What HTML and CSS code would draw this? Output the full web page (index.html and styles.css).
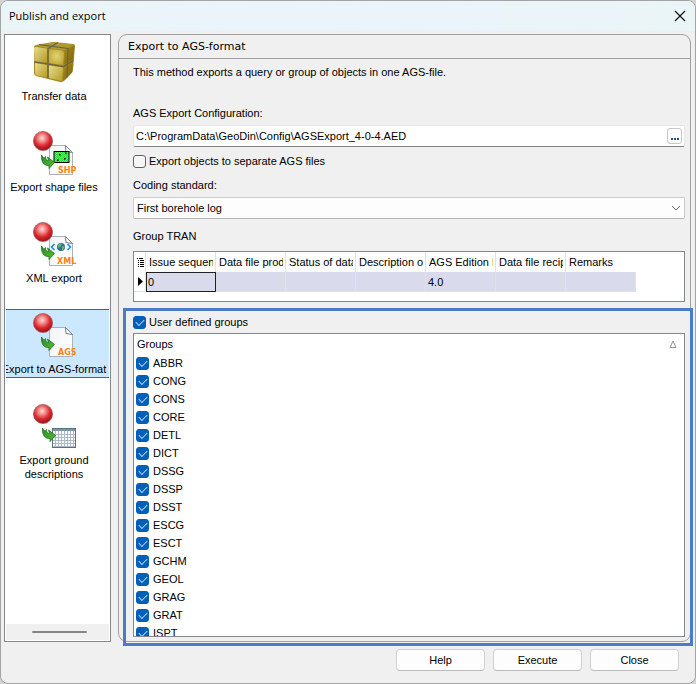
FILE: index.html
```html
<!DOCTYPE html>
<html lang="en">
<head>
<meta charset="utf-8">
<title>Publish and export</title>
<link rel="stylesheet" href="styles.css">
</head>
<body>
<svg class="defs" aria-hidden="true">
  <defs>
    <radialGradient id="red" cx="45%" cy="35%" r="62%">
      <stop offset="0" stop-color="#ffdada"/>
      <stop offset=".3" stop-color="#f58c8c"/>
      <stop offset=".65" stop-color="#dc2a30"/>
      <stop offset="1" stop-color="#a01018"/>
    </radialGradient>
    <linearGradient id="paper" x1="0" y1="0" x2="1" y2="1">
      <stop offset="0" stop-color="#f1f3f5"/>
      <stop offset="1" stop-color="#ffffff"/>
    </linearGradient>
    <linearGradient id="leaf" x1="0" y1="0" x2="1" y2="1">
      <stop offset="0" stop-color="#2c8a2c"/>
      <stop offset="1" stop-color="#56c02a"/>
    </linearGradient>
    <radialGradient id="goldlight" cx="50%" cy="45%" r="70%">
      <stop offset="0" stop-color="#e2d273"/>
      <stop offset="1" stop-color="#bba12a"/>
    </radialGradient>
    <linearGradient id="gold" x1="0" y1="0" x2="1" y2="1">
      <stop offset="0" stop-color="#e8dc8e"/>
      <stop offset="1" stop-color="#b79a24"/>
    </linearGradient>
    <linearGradient id="golddark" x1="0" y1="0" x2="1" y2="1">
      <stop offset="0" stop-color="#a68c1c"/>
      <stop offset="1" stop-color="#7a6408"/>
    </linearGradient>
    <pattern id="dither" width="2" height="2" patternUnits="userSpaceOnUse">
      <rect width="2" height="2" fill="#5cf05c"/>
      <rect width="1" height="1" fill="#2fd83a"/>
      <rect x="1" y="1" width="1" height="1" fill="#2fd83a"/>
    </pattern>
    <symbol id="ball" viewBox="0 0 48 48">
      <circle cx="13" cy="11" r="9.6" fill="url(#red)" stroke="#a0686c" stroke-width=".8"/>
    </symbol>
    <symbol id="arrow" viewBox="0 0 48 48">
      <path d="M11.500 25L14 28.500L15.500 26.500C15.500 29.500 16.500 30.500 18.500 30.500L17.500 27L24.500 32.500L19 38.500V35.500C14 36 11 32 11.500 25Z" fill="url(#leaf)" stroke="#1f6f22" stroke-width=".8" stroke-linejoin="round"/>
    </symbol>
    <symbol id="page" viewBox="0 0 48 48">
      <path d="M19.500 15.500H35.500L42.500 22.500V44.500H19.500Z" fill="url(#paper)" stroke="#aab2b8"/>
      <path d="M35.500 15.500L42.500 22.500L36 21.500Z" fill="#ffffff" stroke="#737f88"/>
    </symbol>
  </defs>
</svg>

<main class="window">
  <header class="titlebar">
    <h1>Publish and export</h1>
    <button class="close" type="button" aria-label="Close window">
      <svg viewBox="0 0 12 12"><path d="M1 1L11 11M11 1L1 11"/></svg>
    </button>
  </header>

  <div class="body">
    <nav class="sidebar" aria-label="Export methods">
      <div class="methods">
        <button class="method" type="button">
          <svg class="icon" viewBox="0 0 48 48">
            <path d="M4 8Q4 6.500 6 6L20 3.500Q22 3 24 3L43 5Q45 5 45 7L43 31Q43 33 41 35L34 42Q32 43.500 30 43L6 37Q4 36.500 4 34Z" fill="#a18a24"/>
            <path d="M5 7L22 3.500L43 5.500L34 11L18 9Z" fill="#b09a34"/>
            <path d="M4 9Q4 8 6 8L17 9.500V23.500L4.500 22Z" fill="url(#gold)"/>
            <path d="M19 10L32 11.500Q34 12 34 14L33 26L19 24Z" fill="url(#goldlight)"/>
            <path d="M5 24L17 26V38.500L7 36.500Q5 36 5 34Z" fill="url(#gold)"/>
            <path d="M19 26.500L33 28.500L32 42L19 39Z" fill="url(#gold)"/>
            <path d="M35 12L44.500 6.500L43 20.500L34 26Z" fill="url(#golddark)"/>
            <path d="M34 29L43 23L42 33L33 42Z" fill="url(#golddark)"/>
            <path d="M4 23L18 25L33.500 27.500L43.500 21.500M18 39.500V9.500L28 3.500M9 5.500L38 9.500L37 38.500" fill="none" stroke="#67614a" stroke-width="1.200"/>
          </svg>
          <span>Transfer data</span>
        </button>
        <button class="method" type="button">
          <svg class="icon" viewBox="0 0 48 48">
            <use href="#page"/><use href="#ball"/>
            <rect x="24" y="21.500" width="15" height="11" fill="url(#dither)" stroke="#000"/>
            <path d="M29 24h1.500v1.500H29zM35 22.500h1.500V24H35zM34 28h1.500v1.500H34zM27 29.500h1.500V31H27z" fill="#000"/>
            <use href="#arrow"/>
            <text class="tag" x="28" y="43">SHP</text>
          </svg>
          <span>Export shape files</span>
        </button>
        <button class="method" type="button">
          <svg class="icon" viewBox="0 0 48 48">
            <use href="#page"/><use href="#ball"/>
            <circle cx="31" cy="26" r="4" fill="#2e70a5"/>
            <path d="M28 24Q30 21.500 32 23L30 26L28.500 27ZM32 25L35 26L32 29.500Z" fill="#79b66b"/>
            <path d="M24.500 23L21.500 26L24.500 29M37.500 23L40.500 26L37.500 29" fill="none" stroke="#1684e8" stroke-width="1.500"/>
            <use href="#arrow"/>
            <text class="tag" x="27" y="43">XML</text>
          </svg>
          <span>XML export</span>
        </button>
        <button class="method selected" type="button" aria-current="true">
          <svg class="icon" viewBox="0 0 48 48">
            <use href="#page"/><use href="#ball"/><use href="#arrow"/>
            <text class="tag" x="28" y="43">AGS</text>
          </svg>
          <span>Export to AGS-format</span>
        </button>
        <button class="method" type="button">
          <svg class="icon" viewBox="0 0 48 48">
            <rect x="22.500" y="25.500" width="23" height="19" fill="#f8fafc" stroke="#5b7180"/>
            <path d="M23 27H45" stroke="#8193a1" stroke-width="2"/>
            <path d="M25.500 28V44M28.500 28V44M31.500 28V44M34.500 28V44M37.500 28V44M40.500 28V44M43.500 28V44M23 31.500H45M23 34.500H45M23 37.500H45M23 40.500H45M23 43.500H45" stroke="#adbac5"/>
            <use href="#ball"/><use href="#arrow" x="1"/>
          </svg>
          <span>Export ground descriptions</span>
        </button>
      </div>
      <div class="scroller"><i></i></div>
    </nav>

    <section class="panel">
      <h2>Export to AGS-format</h2>
      <form class="content" id="export">
        <p class="intro">This method exports a query or group of objects in one AGS-file.</p>

        <label class="caption" for="config">AGS Export Configuration:</label>
        <div class="path">
          <input id="config" type="text" value="C:\ProgramData\GeoDin\Config\AGSExport_4-0-4.AED">
          <button type="button" aria-label="Browse">
            <svg viewBox="0 0 8 2"><path d="M0 0h2v2H0zM3 0h2v2H3zM6 0h2v2H6z"/></svg>
          </button>
        </div>

        <label class="check separate"><input type="checkbox">Export objects to separate AGS files</label>

        <label class="caption" for="coding">Coding standard:</label>
        <div class="choice">
          <select id="coding"><option>First borehole log</option></select>
          <svg viewBox="0 0 10 6"><path d="M1 1L5 5L9 1"/></svg>
        </div>

        <h3 class="caption">Group TRAN</h3>
        <div class="grid">
          <table>
            <colgroup><col class="marker"><col><col><col><col><col><col><col></colgroup>
            <thead>
              <tr>
                <th><svg class="rows" viewBox="0 0 7 9"><path d="M0 .5h1M2 .5h4M1 2.500h1M3 2.500h4M1 4.500h1M3 4.500h4M1 6.500h1M3 6.500h4M1 8.500h1M3 8.500h4"/></svg></th>
                <th><div>Issue sequence</div></th><th><div>Data file producer</div></th><th><div>Status of data</div></th><th><div>Description of</div></th><th><div>AGS Edition Ref</div></th><th><div>Data file recipient</div></th><th><div>Remarks</div></th>
              </tr>
            </thead>
            <tbody>
              <tr>
                <td><svg class="current" viewBox="0 0 5 9"><path d="M0 0L5 4.500L0 9Z"/></svg></td>
                <td class="focused">0</td><td></td><td></td><td></td><td>4.0</td><td></td><td></td>
              </tr>
            </tbody>
          </table>
        </div>

        <section class="groups">
          <label class="check"><input type="checkbox" checked>User defined groups</label>
          <div class="list">
            <div class="listhead">
              <span>Groups</span>
              <svg viewBox="0 0 8 8"><path d="M4 1L7 7.500H1Z"/></svg>
            </div>
            <ul>
              <li><label class="check"><input type="checkbox" checked>ABBR</label></li>
              <li><label class="check"><input type="checkbox" checked>CONG</label></li>
              <li><label class="check"><input type="checkbox" checked>CONS</label></li>
              <li><label class="check"><input type="checkbox" checked>CORE</label></li>
              <li><label class="check"><input type="checkbox" checked>DETL</label></li>
              <li><label class="check"><input type="checkbox" checked>DICT</label></li>
              <li><label class="check"><input type="checkbox" checked>DSSG</label></li>
              <li><label class="check"><input type="checkbox" checked>DSSP</label></li>
              <li><label class="check"><input type="checkbox" checked>DSST</label></li>
              <li><label class="check"><input type="checkbox" checked>ESCG</label></li>
              <li><label class="check"><input type="checkbox" checked>ESCT</label></li>
              <li><label class="check"><input type="checkbox" checked>GCHM</label></li>
              <li><label class="check"><input type="checkbox" checked>GEOL</label></li>
              <li><label class="check"><input type="checkbox" checked>GRAG</label></li>
              <li><label class="check"><input type="checkbox" checked>GRAT</label></li>
              <li><label class="check"><input type="checkbox" checked>ISPT</label></li>
            </ul>
          </div>
        </section>
      </form>
    </section>
  </div>

  <footer class="actions">
    <button type="button">Help</button>
    <button type="submit" form="export">Execute</button>
    <button type="button">Close</button>
  </footer>
</main>
</body>
</html>
```

FILE: styles.css
```css
* { box-sizing: border-box; }

body {
  margin: 0;
  background: #d4d4d4;
  color: #000;
  font: 11px/14px "Liberation Sans", Arial, sans-serif;
}

button, input, select { font: inherit; color: inherit; margin: 0; }
h1, h2, h3, p, ul { margin: 0; padding: 0; font: inherit; }
ul { list-style: none; }
svg { display: block; }
.defs { position: absolute; width: 0; height: 0; }

.window {
  display: flex;
  flex-direction: column;
  height: 100vh;
  border: 1px solid #a3a3a3;
  border-radius: 8px;
  background: #f0f0f0;
  overflow: hidden;
}

.titlebar {
  display: flex;
  flex: none;
  align-items: center;
  justify-content: space-between;
  height: 30px;
  padding: 0 9px 0 8px;
  background: linear-gradient(90deg, #eaf5f8, #ebf3fb 50%, #eaf5f7);
}
.titlebar h1 { font: 11px/16px "Open Sans", "Noto Sans", sans-serif; }
.close { padding: 0; border: 0; background: none; }
.close svg { width: 12px; height: 12px; fill: none; stroke: #111; stroke-width: 1.2; }

.body {
  display: flex;
  flex: 1;
  gap: 7px;
  min-height: 0;
  padding: 3px 4px 0 3px;
}

.sidebar {
  display: flex;
  flex: none;
  flex-direction: column;
  width: 107px;
  padding: 1px;
  border: 1px solid #828790;
  background: #fff;
}
.methods {
  display: flex;
  flex: 1;
  flex-direction: column;
  gap: 22px;
  min-height: 0;
  overflow: hidden;
}
.method {
  display: flex;
  flex: none;
  flex-direction: column;
  align-items: center;
  min-height: 69px;
  padding: 2px 7px 1px 0;
  border: solid transparent;
  border-width: 1px 0;
  background: none;
  overflow: hidden;
}
.method span { width: 108px; padding: 0 8px; text-align: center; }
.method.selected { border-color: #0078d4; background: #cce8ff; }
.method.selected span { padding: 0; white-space: nowrap; }
.icon { flex: none; width: 48px; height: 48px; margin-bottom: 2px; }
.tag { font: bold 8px "DejaVu Sans", sans-serif; fill: #ff8210; }
.scroller {
  display: flex;
  align-items: center;
  justify-content: center;
  height: 16px;
  padding-left: 4px;
  background: #f0f0f0;
}
.scroller i { width: 55px; height: 2px; border-radius: 1px; background: #858585; }

.panel {
  display: flex;
  flex: 1;
  flex-direction: column;
  min-width: 0;
  border: 1px solid #a0a0a0;
  border-radius: 9px;
}
.panel h2 {
  padding: 5px 9px 4px;
  border-bottom: 1px solid #a0a0a0;
  font-family: "DejaVu Sans", Verdana, sans-serif;
}
.content {
  display: flex;
  flex: 1;
  flex-direction: column;
  min-height: 0;
  padding: 6px 5px 4px 14px;
}
.intro { margin-bottom: 27px; }
.caption { display: block; }

.path {
  display: flex;
  align-items: center;
  height: 22px;
  margin-top: 5px;
  padding-right: 2px;
  border: 1px solid #e6e6e6;
  border-bottom-color: #858585;
  border-radius: 2px;
  background: #fff;
}
.path input {
  flex: 1;
  min-width: 0;
  padding: 0 2px;
  border: 0;
  background: none;
  outline: 0;
}
.path button {
  display: flex;
  align-items: flex-end;
  justify-content: center;
  width: 15px;
  height: 16px;
  padding: 0 0 3px;
  border: 1px solid #c8c8c8;
  border-radius: 3px;
  background: #fdfdfd;
}
.path svg { width: 8px; height: 2px; fill: #2c5078; }

.check { display: flex; align-items: center; gap: 3px; }
.check input {
  appearance: none;
  flex: none;
  width: 13px;
  height: 13px;
  border: 1px solid #626262;
  border-radius: 3px;
  background: #f6f6f6;
}
.check input:checked {
  border-color: #005fb8;
  background: #005fb8;
}
.check input:checked::after {
  content: "";
  display: block;
  width: 7px;
  height: 4px;
  margin: 2px 0 0 2px;
  border: solid #b8d4ee;
  border-width: 0 0 1px 1px;
  transform: rotate(-45deg);
}
.separate { margin: 7px 0 10px; }

.choice {
  display: grid;
  align-items: center;
  height: 22px;
  margin: 5px 0 10px;
}
.choice > * { grid-area: 1 / 1; }
.choice select {
  appearance: none;
  width: 100%;
  height: 22px;
  padding: 0 20px 0 3px;
  border: 1px solid #ccc;
  border-bottom-color: #b8b8b8;
  border-radius: 2px;
  background: #fdfdfd;
}
.choice svg {
  justify-self: end;
  width: 10px;
  height: 6px;
  margin-right: 4px;
  fill: none;
  stroke: #606060;
  pointer-events: none;
}

.grid {
  flex: none;
  height: 51px;
  margin: 8px 0 13px;
  border: 1px solid #828790;
  background: #fff;
  overflow: hidden;
}
.grid table {
  width: 502px;
  border-collapse: separate;
  border-spacing: 0;
  table-layout: fixed;
}
.grid col { width: 70px; }
.grid .marker { width: 12px; }
.grid th, .grid td {
  height: 20px;
  padding: 0 0 0 2px;
  border-right: 1px solid #e2e2e2;
  font-weight: normal;
  text-align: left;
}
.grid th { padding: 0 2px 0 3px; }
.grid th div { overflow: hidden; white-space: nowrap; }
.grid th:last-child { border-right-color: transparent; }
.grid td { background: #d9dbec; border-bottom: 1px solid #e2e2e2; }
.grid td:first-child { padding-left: 4px; background: #fff; }
.grid th:first-child { padding: 0 0 0 3px; }
.grid td.focused { padding-left: 1px; border: 1px solid #202020; }
.rows { width: 7px; height: 9px; stroke: #000; shape-rendering: crispEdges; }
.current { width: 5px; height: 9px; }

.groups {
  position: relative;
  display: flex;
  flex: 1;
  flex-direction: column;
  gap: 4px;
  min-height: 0;
}
.groups::after {
  content: "";
  position: absolute;
  inset: -7px -8px -9px -10px;
  border: 3px solid #4a7cca;
  pointer-events: none;
}
.list {
  flex: 1;
  min-height: 0;
  border: 1px solid #828790;
  background: #fff;
  overflow: hidden;
}
.listhead {
  display: flex;
  align-items: center;
  justify-content: space-between;
  height: 20px;
  padding: 0 7px 0 3px;
}
.listhead svg { width: 8px; height: 8px; fill: none; stroke: #909090; }
.list .check { height: 18px; padding-left: 2px; gap: 4px; }

.actions {
  display: flex;
  flex: none;
  justify-content: flex-end;
  gap: 8px;
  padding: 7px 16px 12px;
}
.actions button {
  width: 89px;
  height: 22px;
  padding: 0;
  border: 1px solid #d0d0d0;
  border-bottom-color: #bcbcbc;
  border-radius: 4px;
  background: #fdfdfd;
}

button:focus-visible, input:focus-visible, select:focus-visible { outline: 1px solid #005fb8; }
```
